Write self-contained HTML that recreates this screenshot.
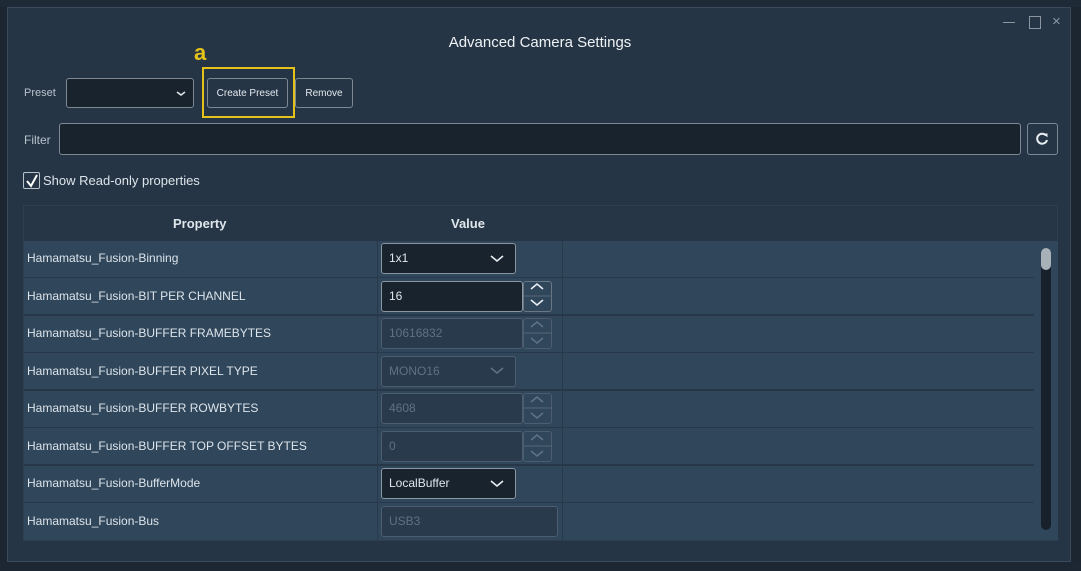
<!DOCTYPE html><html><head><meta charset="utf-8"><style>
*{box-sizing:border-box;margin:0;padding:0}
body{width:1081px;height:571px;overflow:hidden;background:#1b2631;font-family:"Liberation Sans",sans-serif;color:#dfe6ec;position:relative}
.a{position:absolute}
.dlg{left:7px;top:7px;width:1064px;height:555px;background:#253545;border:1px solid #3a4a5a}
.inp{background:#19232d;border:1px solid #7d8893;border-radius:3px}
.btn{border:1px solid #7d8893;border-radius:3px;font-size:10px;text-align:center;line-height:28px;color:#e4e9ee}
.row{left:24px;width:1010px;height:37px;background:#2f465b;border-bottom:1px solid #26384a}
.lbl{left:27px;font-size:12px;color:#dde4ea}
.dis{background:#283a4c;border:1px solid #4b5d6e;border-radius:3px;color:#5f7285;font-size:12px;padding-left:7px}
.en{background:#19232d;border:1px solid #8a96a1;border-radius:3px;color:#dfe6ec;font-size:12px;padding-left:7px}
.spin{width:29px;height:31px;border:1px solid #6a7785;border-radius:3px}
.spin.d{border-color:#4b5d6e}
</style></head><body>
<div class="a dlg"></div>
<div class="a" style="left:0;top:0;width:1081px;height:7px;background:#1e2a36"></div>
<div class="a" style="left:0;top:562px;width:1081px;height:9px;background:#1c2733"></div>
<div class="a" style="left:440px;top:34px;width:200px;text-align:center;font-size:15px;color:#eef2f5">Advanced Camera Settings</div>
<div class="a" style="left:1003px;top:22px;width:12px;height:1px;background:#8b96a1"></div>
<div class="a" style="left:1029px;top:16px;width:12px;height:13px;border:1.5px solid #8b96a1"></div>
<div class="a" style="left:1052px;top:13px;font-size:15px;color:#8b96a1">×</div>
<div class="a" style="left:24px;top:87px;font-size:11px;color:#b9c3cc">Preset</div>
<div class="a inp" style="left:66px;top:78px;width:128px;height:30px"></div>
<svg class="a" style="left:175px;top:90px" width="12" height="8"><path d="M2 2l4 3 4-3" stroke="#dfe6ec" stroke-width="1.5" fill="none"/></svg>
<div class="a" style="left:202px;top:67px;width:93px;height:51px;border:2px solid #e5c21a"></div>
<div class="a" style="left:194px;top:40px;font-size:22px;font-weight:bold;color:#e5c21a">a</div>
<div class="a btn" style="left:207px;top:78px;width:81px;height:30px;line-height:30px">Create Preset</div>
<div class="a btn" style="left:295px;top:78px;width:58px;height:30px;line-height:30px">Remove</div>
<div class="a" style="left:24px;top:133px;font-size:12px;color:#b9c3cc">Filter</div>
<div class="a inp" style="left:59px;top:123px;width:962px;height:32px"></div>
<div class="a" style="left:1027px;top:123px;width:31px;height:32px;border:1px solid #7d8893;border-radius:3px"></div>
<svg class="a" style="left:1034px;top:131px" width="16" height="16"><path d="M12 4.5A5 5 0 1 0 13 9" stroke="#e8edf1" stroke-width="2" fill="none"/><path d="M9.5 2.5h4v4z" fill="#e8edf1"/></svg>
<div class="a" style="left:23px;top:172px;width:17px;height:17px;border:1px solid #b9c3cc;border-radius:2px"></div>
<svg class="a" style="left:24px;top:172px" width="16" height="17"><path d="M3 9l4 5 6-11" stroke="#fff" stroke-width="2" fill="none"/></svg>
<div class="a" style="left:43px;top:173px;font-size:13px;color:#dde4ea">Show Read-only properties</div>
<div class="a" style="left:23px;top:205px;width:1035px;height:336px;background:#263646;border:1px solid #2c3e50"></div>
<div class="a" style="left:173px;top:216px;font-size:13px;font-weight:bold">Property</div>
<div class="a" style="left:451px;top:216px;font-size:13px;font-weight:bold">Value</div>
<div class="a row" style="top:241px"></div><div class="a row" style="top:278px"></div><div class="a row" style="top:316px"></div><div class="a row" style="top:353px"></div><div class="a row" style="top:391px"></div><div class="a row" style="top:428px"></div><div class="a row" style="top:466px"></div><div class="a row" style="top:503px;height:37px;border:none"></div>
<div class="a" style="left:1034px;top:241px;width:24px;height:299px;background:#2f465b"></div>
<div class="a" style="left:377px;top:241px;width:1px;height:299px;background:#27394b"></div>
<div class="a" style="left:562px;top:241px;width:1px;height:299px;background:#27394b"></div>
<div class="a" style="left:1041px;top:248px;width:10px;height:282px;background:#18212b;border-radius:5px"></div>
<div class="a" style="left:1041px;top:248px;width:10px;height:22px;background:#a8b0b8;border-radius:5px"></div>
<div class="a lbl" style="top:251px">Hamamatsu_Fusion-Binning</div>
<div class="a lbl" style="top:289px">Hamamatsu_Fusion-BIT PER CHANNEL</div>
<div class="a lbl" style="top:326px">Hamamatsu_Fusion-BUFFER FRAMEBYTES</div>
<div class="a lbl" style="top:364px">Hamamatsu_Fusion-BUFFER PIXEL TYPE</div>
<div class="a lbl" style="top:401px">Hamamatsu_Fusion-BUFFER ROWBYTES</div>
<div class="a lbl" style="top:439px">Hamamatsu_Fusion-BUFFER TOP OFFSET BYTES</div>
<div class="a lbl" style="top:476px">Hamamatsu_Fusion-BufferMode</div>
<div class="a lbl" style="top:514px">Hamamatsu_Fusion-Bus</div>
<div class="a en" style="left:381px;top:243px;width:135px;height:31px;line-height:29px">1x1</div>
<div class="a en" style="left:381px;top:281px;width:142px;height:31px;line-height:29px">16</div>
<div class="a spin" style="left:523px;top:281px"></div>
<div class="a dis" style="left:381px;top:318px;width:142px;height:31px;line-height:29px">10616832</div>
<div class="a spin d" style="left:523px;top:318px"></div>
<div class="a dis" style="left:381px;top:356px;width:135px;height:31px;line-height:29px">MONO16</div>
<div class="a dis" style="left:381px;top:393px;width:142px;height:31px;line-height:29px">4608</div>
<div class="a spin d" style="left:523px;top:393px"></div>
<div class="a dis" style="left:381px;top:431px;width:142px;height:31px;line-height:29px">0</div>
<div class="a spin d" style="left:523px;top:431px"></div>
<div class="a en" style="left:381px;top:468px;width:135px;height:31px;line-height:29px">LocalBuffer</div>
<div class="a dis" style="left:381px;top:506px;width:177px;height:31px;line-height:29px">USB3</div>
<svg class="a" style="left:0;top:0" width="1081" height="571">
<g fill="none" stroke-width="1.6">
<path d="M491 256l6 5 6-5M491 481l6 5 6-5" stroke="#e8edf1"/>
<path d="M491 368l6 5 6-5" stroke="#5f7285"/>
<path d="M531 289l6-5 6 5M531 300l6 5 6-5" stroke="#e8edf1"/>
<path d="M531 327l6-5 6 5M531 338l6 5 6-5M531 402l6-5 6 5M531 413l6 5 6-5M531 440l6-5 6 5M531 451l6 5 6-5" stroke="#5f7285"/>
<path d="M524 296h28M524 333h28M524 408h28M524 446h28" stroke="#5a6878" stroke-width="1"/>
</g></svg>
</body></html>
